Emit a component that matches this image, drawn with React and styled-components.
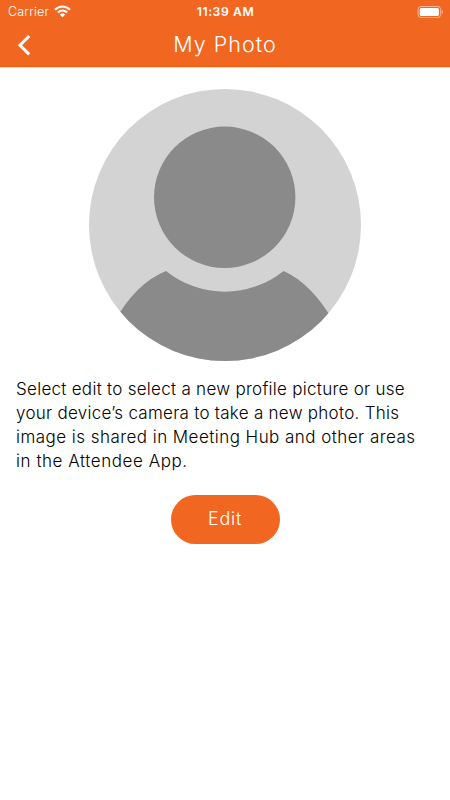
import React from "react";
import styled, { createGlobalStyle } from "styled-components";

const Global = createGlobalStyle`
  * { box-sizing: border-box; }
  body { margin: 0; background: #fff; }
`;

const Screen = styled.div`
  display: flex;
  flex-direction: column;
  width: 450px;
  height: 800px;
  overflow: hidden;
  background: #fff;
  color: #000;
  font-family: Inter, "Open Sans", sans-serif;
`;

const Header = styled.header`
  height: 67px;
  background: #f16722;
  box-shadow: 0 1px 0 #fde0d0;
  border-bottom: 1px solid #f35a0c;
  color: #fff;
`;

const StatusBar = styled.div`
  display: grid;
  grid-template-columns: 1fr auto 1fr;
  align-items: center;
  height: 23px;
  padding: 0 7px 0 8px;
  line-height: 23px;
`;

const Carrier = styled.div`
  display: flex;
  align-items: center;
  gap: 5px;
  font-size: 12.5px;
  font-weight: 300;
  letter-spacing: 0.2px;
  svg { display: block; }
`;

const Clock = styled.time`
  font-size: 12.2px;
  font-weight: 600;
  letter-spacing: 0.6px;
`;

const Battery = styled.svg`
  display: block;
  justify-self: end;
`;

const NavBar = styled.div`
  display: grid;
  grid-template-columns: 50px 1fr 50px;
  align-items: center;
  height: 43px;
`;

const BackButton = styled.button`
  display: flex;
  padding: 0 0 0 16px;
  border: 0;
  background: none;
  color: inherit;
`;

const Title = styled.h1`
  margin: 0 0 2px;
  text-align: center;
  font-size: 21.5px;
  font-weight: 300;
  line-height: 28px;
  letter-spacing: 1px;
`;

const Content = styled.main`
  display: flex;
  flex-direction: column;
  align-items: center;
  padding: 22px 16px 0;
`;

const Avatar = styled.svg`
  display: block;
  width: 272px;
  height: 272px;
  border-radius: 50%;
`;

const Description = styled.p`
  align-self: stretch;
  margin: 15.5px 0 22px;
  font-size: 17px;
  font-weight: 300;
  line-height: 24px;
`;

const Line = styled.span`
  display: block;
  white-space: nowrap;
  letter-spacing: ${(p) => p.$tracking}px;
`;

const EditButton = styled.button`
  width: 109px;
  height: 49px;
  padding: 0 0 1px;
  border: 0;
  border-radius: 25px;
  background: #f16722;
  color: #fff;
  font-family: inherit;
  font-size: 18px;
  font-weight: 300;
  letter-spacing: 0.7px;
`;

export default function App() {
  return (
    <Screen>
      <Global />
      <Header>
        <StatusBar>
          <Carrier>
            Carrier
            <svg width="17" height="13" viewBox="0 0 17 13" fill="none" stroke="#fff" strokeWidth="2.1">
              <path d="M1 4.8C5.3.4 11.7.4 16 4.8" />
              <path d="M3.8 7.6C6.6 4.9 10.4 4.9 13.2 7.6" />
              <path d="M5.8 9.5Q8.5 7.1 11.2 9.5L8.5 12.3Z" fill="#fff" stroke="none" />
            </svg>
          </Carrier>
          <Clock>11:39 AM</Clock>
          <Battery width="26" height="12" viewBox="0 0 26 12">
            <rect x="1.1" y=".5" width="22.6" height="11" rx="3" fill="none" stroke="#fff" strokeOpacity=".5" />
            <rect x="2.7" y="2" width="19.2" height="8" rx="1.5" fill="#fff" />
            <path d="M24.8 4v4q1.2-.7 1.2-2t-1.2-2" fill="#fff" fillOpacity=".55" />
          </Battery>
        </StatusBar>
        <NavBar>
          <BackButton aria-label="Back">
            <svg width="15" height="22" viewBox="0 0 15 22" fill="none" stroke="#fff" strokeWidth="3">
              <path d="M13.2 2 4 11.2l9.2 9.2" />
            </svg>
          </BackButton>
          <Title>My Photo</Title>
        </NavBar>
      </Header>
      <Content>
        <Avatar viewBox="89 89 272 272">
          <rect x="89" y="89" width="272" height="272" fill="#d3d3d3" />
          <circle cx="224.7" cy="197.3" r="70.7" fill="#8a8a8a" />
          <path
            d="M114 322Q136 283 166 271A94 94 0 0 0 283.6 271Q311 283 334 322V361H114Z"
            fill="#8a8a8a"
          />
        </Avatar>
        <Description>
          <Line $tracking={0.28}>Select edit to select a new profile picture or use</Line>
          <Line $tracking={0.27}>your device’s camera to take a new photo. This</Line>
          <Line $tracking={0.46}>image is shared in Meeting Hub and other areas</Line>
          <Line $tracking={0.55}>in the Attendee App.</Line>
        </Description>
        <EditButton>Edit</EditButton>
      </Content>
    </Screen>
  );
}
